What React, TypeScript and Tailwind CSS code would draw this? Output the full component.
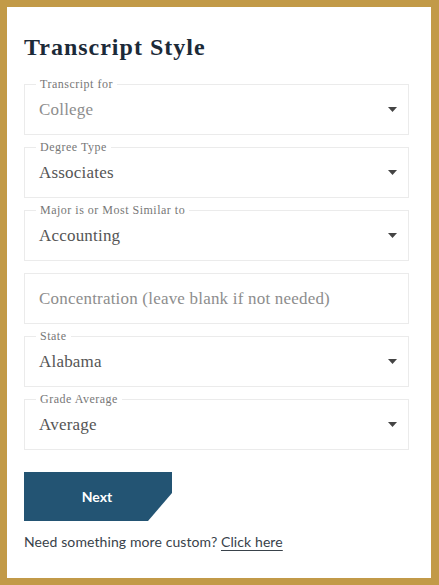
const serif = { fontFamily: '"Liberation Serif", "DejaVu Serif", serif' };

type Field = { label?: string; value: string; placeholder?: boolean; select: boolean };

const fields: Field[] = [
  { label: 'Transcript for', value: 'College', placeholder: true, select: true },
  { label: 'Degree Type', value: 'Associates', select: true },
  { label: 'Major is or Most Similar to', value: 'Accounting', select: true },
  { value: 'Concentration (leave blank if not needed)', select: false },
  { label: 'State', value: 'Alabama', select: true },
  { label: 'Grade Average', value: 'Average', select: true },
];

function Caret() {
  return (
    <svg width="9" height="5" viewBox="0 0 9 5" className="shrink-0">
      <path d="M0 0h9L4.5 5z" fill="#444" />
    </svg>
  );
}

function FormField({ field }: { field: Field }) {
  return (
    <div className="relative h-[51px] border border-[#ebebeb] flex items-center pl-[14px] pr-[11px]">
      {field.label && (
        <span
          className="absolute left-[11px] top-[-8px] bg-white px-[4px] text-[12px] leading-[14px] tracking-[0.5px] text-[#777]"
          style={serif}
        >
          {field.label}
        </span>
      )}
      <span
        className={`flex-1 text-[17px] tracking-[0.2px] ${field.placeholder || !field.select ? 'text-[#8d8d8d]' : 'text-[#555]'}`}
        style={serif}
      >
        {field.value}
      </span>
      {field.select && <Caret />}
    </div>
  );
}

export default function App() {
  return (
    <div className="w-[439px] h-[585px] bg-[#c29a48] pl-[7px] pt-[7px] pr-[8px] pb-[7px]">
      <div className="h-full bg-white px-[17px] pt-[26px]">
        <h1
          className="text-[24px] leading-[28px] font-bold tracking-[1px] text-[#1c2a38] mb-[23px]"
          style={serif}
        >
          Transcript Style
        </h1>
        <div className="flex flex-col gap-[12px] w-[385px]">
          {fields.map((f) => (
            <FormField key={f.value} field={f} />
          ))}
        </div>
        <button
          className="mt-[22px] w-[148px] h-[49px] bg-[#235473] text-white text-[14px] font-bold pr-[2px]"
          style={{
            fontFamily: 'Lato, sans-serif',
            clipPath: 'polygon(0 0, 100% 0, 100% 21px, 124px 100%, 0 100%)',
          }}
        >
          Next
        </button>
        <p className="mt-[10px] text-[14px] tracking-[0.1px] text-[#39424a]" style={{ fontFamily: 'Lato, sans-serif' }}>
          Need something more custom?{' '}
          <a className="underline underline-offset-[3px]">Click here</a>
        </p>
      </div>
    </div>
  );
}
